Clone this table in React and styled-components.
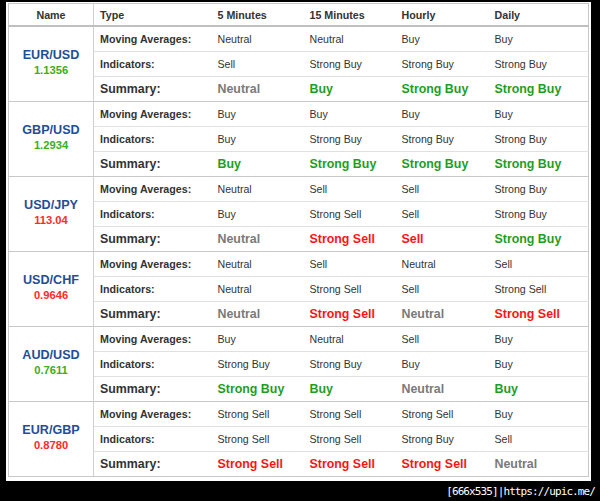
import React from "react";
import styled, { createGlobalStyle } from "styled-components";

const pairs = [
  {
    name: "EUR/USD",
    price: "1.1356",
    up: true,
    ma: ["Neutral", "Neutral", "Buy", "Buy"],
    ind: ["Sell", "Strong Buy", "Strong Buy", "Strong Buy"],
    sum: ["Neutral", "Buy", "Strong Buy", "Strong Buy"],
  },
  {
    name: "GBP/USD",
    price: "1.2934",
    up: true,
    ma: ["Buy", "Buy", "Buy", "Buy"],
    ind: ["Buy", "Strong Buy", "Strong Buy", "Strong Buy"],
    sum: ["Buy", "Strong Buy", "Strong Buy", "Strong Buy"],
  },
  {
    name: "USD/JPY",
    price: "113.04",
    up: false,
    ma: ["Neutral", "Sell", "Sell", "Strong Buy"],
    ind: ["Buy", "Strong Sell", "Sell", "Strong Buy"],
    sum: ["Neutral", "Strong Sell", "Sell", "Strong Buy"],
  },
  {
    name: "USD/CHF",
    price: "0.9646",
    up: false,
    ma: ["Neutral", "Sell", "Neutral", "Sell"],
    ind: ["Neutral", "Strong Sell", "Sell", "Strong Sell"],
    sum: ["Neutral", "Strong Sell", "Neutral", "Strong Sell"],
  },
  {
    name: "AUD/USD",
    price: "0.7611",
    up: true,
    ma: ["Buy", "Neutral", "Sell", "Buy"],
    ind: ["Strong Buy", "Strong Buy", "Buy", "Buy"],
    sum: ["Strong Buy", "Buy", "Neutral", "Buy"],
  },
  {
    name: "EUR/GBP",
    price: "0.8780",
    up: false,
    ma: ["Strong Sell", "Strong Sell", "Strong Sell", "Buy"],
    ind: ["Strong Sell", "Strong Sell", "Strong Buy", "Sell"],
    sum: ["Strong Sell", "Strong Sell", "Strong Sell", "Neutral"],
  },
];

const toneOf = (v) => {
  if (v.includes("Buy")) return "buy";
  if (v.includes("Sell")) return "sell";
  return "neutral";
};

const GlobalStyle = createGlobalStyle`
  body {
    margin: 0;
    background: #000;
    font-family: "Liberation Sans", Arial, sans-serif;
  }
`;

const Frame = styled.div`
  width: 585px;
  height: 479px;
  margin: 2px 0 0 6px;
  padding: 1px 2px 0 2px;
  box-sizing: border-box;
  background: #fff;
`;

const Table = styled.table`
  width: 581px;
  border-collapse: collapse;
  table-layout: fixed;
  border: 1px solid #c8c8c8;
  color: #333;
`;

const HeadCell = styled.th`
  height: 21px;
  padding: 0 0 0 7px;
  font-size: 10.7px;
  font-weight: bold;
  text-align: ${(p) => (p.$center ? "center" : "left")};
  border-bottom: 2px solid #c0c0c0;
  ${(p) => p.$center && "padding: 0; border-right: 1px solid #d0d0d0;"}
`;

const Row = styled.tr`
  height: 25px;
  border-bottom: 1px solid ${(p) => (p.$last ? "#c8c8c8" : "#e0e0e0")};
`;

const NameCell = styled.td`
  text-align: center;
  vertical-align: middle;
  border-right: 1px solid #d0d0d0;
  border-bottom: 1px solid #c8c8c8;
  padding: 0 0 2px;
`;

const Pair = styled.div`
  font-size: 12.6px;
  font-weight: bold;
  color: #1f4e98;
  line-height: 15px;
`;

const Price = styled.div`
  font-size: 11.2px;
  font-weight: bold;
  line-height: 14px;
  color: ${(p) => (p.$up ? "#3aae1c" : "#ff2a2a")};
`;

const TypeCell = styled.td`
  padding: 0 0 0 6px;
  font-weight: bold;
  font-size: ${(p) => (p.$big ? "12.4px" : "10.7px")};
  color: #333;
  white-space: nowrap;
`;

const ValueCell = styled.td`
  padding: 0 0 0 7px;
  font-size: 10.6px;
  color: #333;
  white-space: nowrap;
`;

const SummaryCell = styled.td`
  padding: 0 0 0 7px;
  font-size: 12.4px;
  font-weight: bold;
  white-space: nowrap;
  color: ${(p) =>
    p.$tone === "buy" ? "#1e9e1e" : p.$tone === "sell" ? "#ff1414" : "#7a7a7a"};
`;

const Watermark = styled.div`
  height: 20px;
  padding-right: 5px;
  display: flex;
  align-items: center;
  justify-content: flex-end;
  color: #fff;
  font-family: "DejaVu Sans Mono", "Liberation Mono", monospace;
  font-size: 11px;
  letter-spacing: -0.9px;
`;

const App = () => {
  return (
    <>
      <GlobalStyle />
      <Frame>
        <Table>
          <colgroup>
            <col style={{ width: 85 }} />
            <col style={{ width: 117 }} />
            <col style={{ width: 92 }} />
            <col style={{ width: 92 }} />
            <col style={{ width: 93 }} />
            <col />
          </colgroup>
          <thead>
            <tr>
              <HeadCell $center>Name</HeadCell>
              <HeadCell style={{ paddingLeft: 6 }}>Type</HeadCell>
              <HeadCell>5 Minutes</HeadCell>
              <HeadCell>15 Minutes</HeadCell>
              <HeadCell>Hourly</HeadCell>
              <HeadCell>Daily</HeadCell>
            </tr>
          </thead>
          <tbody>
            {pairs.map((p) => (
              <React.Fragment key={p.name}>
                <Row>
                  <NameCell rowSpan={3}>
                    <Pair>{p.name}</Pair>
                    <Price $up={p.up}>{p.price}</Price>
                  </NameCell>
                  <TypeCell>Moving Averages:</TypeCell>
                  {p.ma.map((v, i) => (
                    <ValueCell key={i}>{v}</ValueCell>
                  ))}
                </Row>
                <Row>
                  <TypeCell>Indicators:</TypeCell>
                  {p.ind.map((v, i) => (
                    <ValueCell key={i}>{v}</ValueCell>
                  ))}
                </Row>
                <Row $last>
                  <TypeCell $big>Summary:</TypeCell>
                  {p.sum.map((v, i) => (
                    <SummaryCell key={i} $tone={toneOf(v)}>
                      {v}
                    </SummaryCell>
                  ))}
                </Row>
              </React.Fragment>
            ))}
          </tbody>
        </Table>
      </Frame>
      <Watermark>[666x535]|https://upic.me/</Watermark>
    </>
  );
};

export default App;
